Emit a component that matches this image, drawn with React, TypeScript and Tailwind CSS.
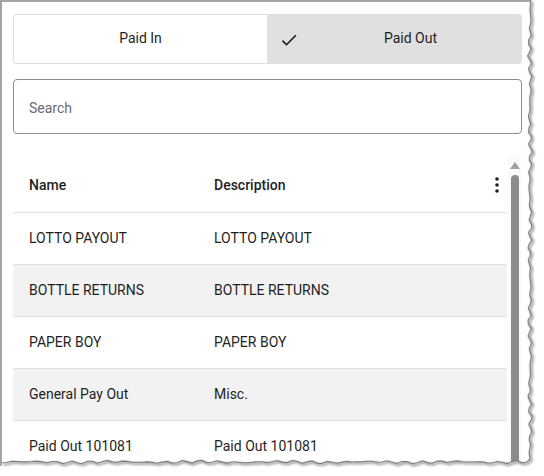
import React from "react";

const rows = [
  { name: "LOTTO PAYOUT", desc: "LOTTO PAYOUT" },
  { name: "BOTTLE RETURNS", desc: "BOTTLE RETURNS" },
  { name: "PAPER BOY", desc: "PAPER BOY" },
  { name: "General Pay Out", desc: "Misc." },
  { name: "Paid Out 101081", desc: "Paid Out 101081" },
];

function jit(i: number) {
  return Math.sin(i * 1.7) * 1.1 + Math.sin(i * 4.3 + 1) * 0.8 + Math.sin(i * 0.37) * 0.6;
}

function TornEdge() {
  const pts: [number, number][] = [];
  for (let y = 0; y <= 455; y += 4) pts.push([530 + jit(y / 4), y]);
  pts.push([530, 459]);
  pts.push([527, 462]);
  for (let x = 522; x >= 0; x -= 5) pts.push([x, 462 + jit(x / 5 + 7) * 0.8]);
  const line = "M" + pts.map((p) => `${p[0].toFixed(1)},${p[1].toFixed(1)}`).join(" L");
  const fill = line + " L0,476 L544,476 L544,0 Z";
  return (
    <svg className="absolute left-0 top-0 pointer-events-none" width={544} height={476} viewBox="0 0 544 476">
      <defs>
        <filter id="sh" x="-10%" y="-10%" width="120%" height="120%">
          <feGaussianBlur stdDeviation="1.2" />
        </filter>
      </defs>
      <path d={fill} fill="#ffffff" />
      <path d={line} fill="none" stroke="#9a9a9a" strokeWidth={2.2} filter="url(#sh)" transform="translate(1.5,1.5)" />
      <path d={line} fill="none" stroke="#7c7c7c" strokeWidth={1.1} />
    </svg>
  );
}

export default function App() {
  return (
    <div
      className="relative w-[544px] h-[476px] bg-white overflow-hidden"
      style={{ fontFamily: "Roboto, 'Liberation Sans', sans-serif" }}
    >
      <div className="w-[534px] h-[466px] border-t-2 border-l-2 border-[#a3a3a3] bg-white pl-[11px] pt-[12px] overflow-hidden">
        {/* toggle */}
        <div className="flex w-[509px] h-[50px] text-[14px] text-[#1f1f1f]">
          <div className="w-[254px] h-full flex items-center justify-center border border-r-0 border-[#dedede] rounded-l-[4px] bg-white pb-[2px]">
            Paid In
          </div>
          <div className="flex-1 h-full flex items-center bg-[#e0e0e0] rounded-r-[4px] pl-[12px]">
            <svg width="20" height="20" viewBox="0 0 24 24" className="mt-[2px]">
              <path d="M9 16.17L4.83 12l-1.42 1.41L9 19 21 7l-1.41-1.41z" fill="#1f1f1f" />
            </svg>
            <span className="flex-1 text-center pb-[2px]">Paid Out</span>
          </div>
        </div>

        {/* search */}
        <div className="mt-[15px] w-[509px] h-[55px] border border-[#8c8c8c] rounded-[4px] flex items-center pl-[15px] pt-[4px] text-[14px] text-[#6a6a72]">
          Search
        </div>

        {/* table + scrollbar */}
        <div className="mt-[23px] flex">
          <div className="w-[494px] pt-[4px] text-[14px] text-[#1f1f1f]">
            <div className="h-[52px] flex items-center border-b border-[#e0e0e0] font-medium pb-[3px]">
              <div className="w-[185px] pl-[16px]">Name</div>
              <div className="flex-1 pl-[16px]">Description</div>
              <svg width="8" height="20" viewBox="0 0 8 20" className="mr-[6px] mb-[1px]">
                <circle cx="4" cy="4" r="1.8" fill="#1f1f1f" />
                <circle cx="4" cy="10" r="1.8" fill="#1f1f1f" />
                <circle cx="4" cy="16" r="1.8" fill="#1f1f1f" />
              </svg>
            </div>
            {rows.map((r, i) => (
              <div
                key={i}
                className={
                  "h-[52px] flex items-center border-b border-[#e0e0e0] " +
                  (i % 2 === 1 ? "bg-[#f2f2f2]" : "bg-white")
                }
              >
                <div className="w-[185px] pl-[16px]">{r.name}</div>
                <div className="flex-1 pl-[16px]">{r.desc}</div>
              </div>
            ))}
          </div>
          <div className="ml-[1px] w-[13px] h-[320px] bg-[#fafafa] flex flex-col items-center pt-[5px]">
            <svg width="10" height="7" viewBox="0 0 10 7">
              <path d="M5 0 L10 7 L0 7 Z" fill="#a0a0a0" />
            </svg>
            <div className="mt-[6px] w-[8px] flex-1 bg-[#8c8c8c] rounded-t-full" />
          </div>
        </div>
      </div>
      <TornEdge />
    </div>
  );
}
